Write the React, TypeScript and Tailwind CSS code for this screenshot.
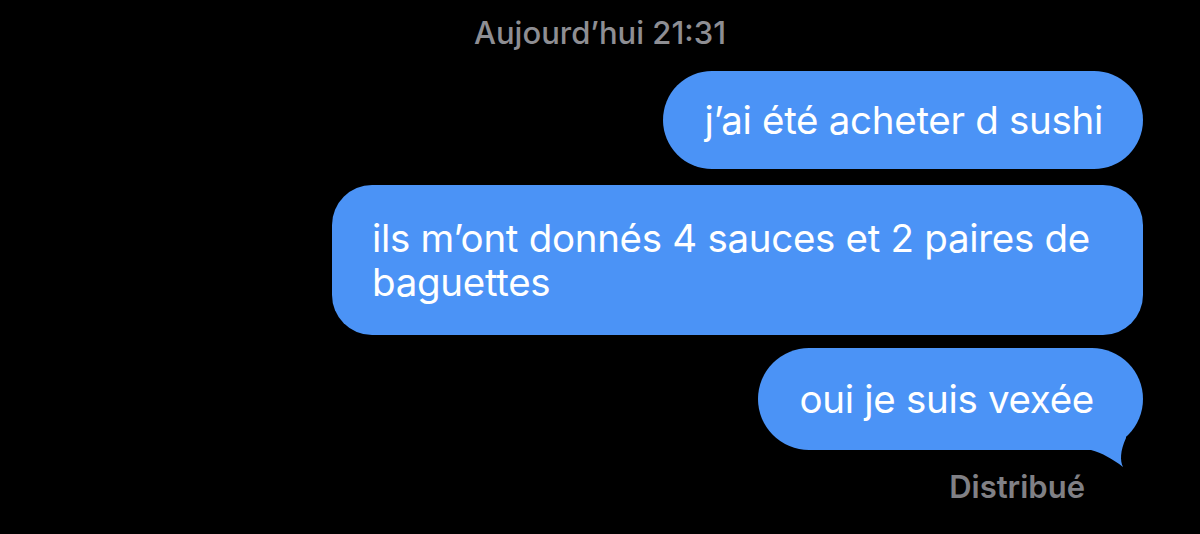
import React from 'react'

const Tail = () => (
    <svg
        className="absolute right-[-3px] bottom-[-20px] w-[60px] h-[50px]"
        viewBox="0 0 60 50"
        fill="#4b93f6"
    >
        <path d="M5 30 C16 33 27 39 37 47 C34 41 34 31 40 18 L40 0 L5 0 Z" />
    </svg>
)

const App = () => {
    return (
        <div className="w-[1200px] h-[534px] bg-black overflow-hidden font-['Inter',sans-serif] antialiased">
            {/* date header */}
            <div className="pt-[14px] text-center text-[31px] leading-[38px] font-medium text-[#8e8e93]">
                Aujourd’hui 21:31
            </div>

            <div className="flex flex-col items-end pr-[57px] mt-[19px] text-white text-[38.5px] leading-[44px] tracking-[-0.3px]">
                <div className="bg-[#4b93f6] rounded-full pl-[42px] pr-[40px] py-[27px]">
                    j’ai été acheter d sushi
                </div>
                <div className="mt-[16px] bg-[#4b93f6] rounded-[40px] pl-[40px] pr-[30px] py-[31px] w-[811px]">
                    ils m’ont donnés 4 sauces et 2 paires de baguettes
                </div>
                <div className="relative mt-[13px] bg-[#4b93f6] rounded-full pl-[41px] pr-[49px] py-[29px]">
                    oui je suis vexée
                    <Tail />
                </div>
                <div className="mt-[20px] mr-[58px] text-[31px] leading-[34px] font-semibold text-[#808085] tracking-normal">
                    Distribué
                </div>
            </div>
        </div>
    )
}

export default App
